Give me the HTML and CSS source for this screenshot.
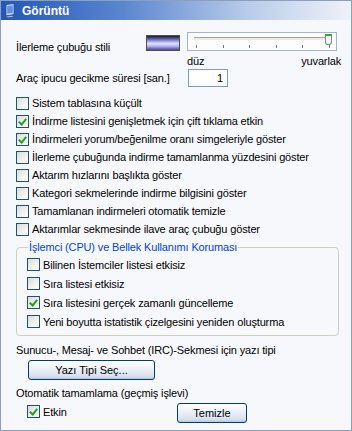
FILE: index.html
```html
<!DOCTYPE html>
<html lang="tr">
<head>
    <meta charset="UTF-8">
    <title>Görüntü</title>
    <link rel="stylesheet" href="styles.css">
</head>
<body>
    <div class="panel">
        <div class="titlebar">
            <svg class="title-icon" width="13" height="16" viewBox="0 0 13 16">
                <path d="M2 1.5l8 -1v11l-8 1.5z" fill="#cfe0fb" stroke="#2b4f9e" stroke-width="0.9"/>
                <path d="M3.2 3l5.6 -0.7v7.5l-5.6 1z" fill="#5f8fe6"/>
                <path d="M1 13.5l7 -1.2l3 1.2l-7 1.5z" fill="#b9c9e6" stroke="#2b4f9e" stroke-width="0.8"/>
            </svg>
            <span>Görüntü</span>
        </div>

        <div class="content">
            <div class="row-style">
                <span class="style-label">İlerleme çubuğu stili</span>
                <div class="bar-sample"></div>
                <div class="slider-wrap">
                    <div class="slider">
                        <div class="track"></div>
                        <div class="ticks">
                            <i></i><i></i><i></i><i></i><i></i><i></i>
                        </div>
                        <div class="thumb"></div>
                    </div>
                    <div class="slider-labels">
                        <span>düz</span>
                        <span>yuvarlak</span>
                    </div>
                </div>
            </div>

            <div class="row-delay">
                <span class="delay-label">Araç ipucu gecikme süresi [san.]</span>
                <div class="num-input">1</div>
            </div>

            <div class="checks">
                <label class="check"><span class="box"></span>Sistem tablasına küçült</label>
                <label class="check"><span class="box on"></span>İndirme listesini genişletmek için çift tıklama etkin</label>
                <label class="check"><span class="box on"></span>İndirmeleri yorum/beğenilme oranı simgeleriyle göster</label>
                <label class="check"><span class="box"></span>İlerleme çubuğunda indirme tamamlanma yüzdesini göster</label>
                <label class="check"><span class="box"></span>Aktarım hızlarını başlıkta göster</label>
                <label class="check"><span class="box"></span>Kategori sekmelerinde indirme bilgisini göster</label>
                <label class="check"><span class="box"></span>Tamamlanan indirmeleri otomatik temizle</label>
                <label class="check"><span class="box"></span>Aktarımlar sekmesinde ilave araç çubuğu göster</label>
            </div>

            <fieldset class="group">
                <legend>İşlemci (CPU) ve Bellek Kullanımı Koruması</legend>
                <label class="check"><span class="box"></span>Bilinen İstemciler listesi etkisiz</label>
                <label class="check"><span class="box"></span>Sıra listesi etkisiz</label>
                <label class="check"><span class="box on"></span>Sıra listesini gerçek zamanlı güncelleme</label>
                <label class="check"><span class="box"></span>Yeni boyutta istatistik çizelgesini yeniden oluşturma</label>
            </fieldset>

            <div class="font-label">Sunucu-, Mesaj- ve Sohbet (IRC)-Sekmesi için yazı tipi</div>
            <button class="xp-btn font-btn">Yazı Tipi Seç...</button>

            <div class="auto-label">Otomatik tamamlama (geçmiş işlevi)</div>
            <div class="row-auto">
                <label class="check"><span class="box on"></span>Etkin</label>
                <button class="xp-btn clear-btn">Temizle</button>
            </div>
        </div>
    </div>
</body>
</html>
```

FILE: styles.css
```css
:root {
    --panel-bg: #f7f8fc;
    --text: #000;
    --group-blue: #0046d5;
    --box-border: #1c5180;
    --check-green: #21a121;
}

body {
    margin: 0;
    font-family: 'Liberation Sans', Arial, sans-serif;
    font-size: 11px;
    letter-spacing: -0.15px;
    color: var(--text);
    background: #ffffff;
}

.panel {
    width: 350px;
    height: 429px;
    border: 1px solid #8d9fbc;
    background: var(--panel-bg);
    overflow: hidden;
}

.titlebar {
    height: 19px;
    display: flex;
    align-items: center;
    gap: 5px;
    padding-left: 3px;
    background: linear-gradient(to right, #2456b7 0%, #5b86cf 35%, #b8cbea 70%, #eef2f9 100%);
    color: #fff;
    font-weight: bold;
    font-size: 12px;
    letter-spacing: 0;
}

.title-icon {
    flex-shrink: 0;
}

.content {
    padding: 12px 0 0 15px;
}

/* progress bar style row */
.row-style {
    display: flex;
    align-items: flex-start;
}

.style-label {
    width: 130px;
    margin-top: 9px;
}

.bar-sample {
    width: 32px;
    height: 14px;
    margin-top: 3px;
    border: 1px solid #505050;
    background: linear-gradient(to bottom, #1a1a2a 0%, #5c5c9c 20%, #a9a9f4 40%, #e4e4ff 55%, #a9a9f4 75%, #4a4a80 100%);
}

.slider-wrap {
    margin-left: 7px;
    width: 150px;
}

.slider {
    position: relative;
    height: 17px;
    border: 1px solid #a7b3c6;
    background: #fdfdfd;
}

.track {
    margin: 4px 6px 0 6px;
    height: 2px;
    border-top: 1px solid #a0a0a0;
    background: #ecebe4;
}

.ticks {
    display: flex;
    justify-content: space-between;
    margin: 5px 6px 0 8px;
}

.ticks i {
    width: 1px;
    height: 3px;
    background: #7a7a7a;
}

.thumb {
    position: absolute;
    right: 4px;
    top: 1px;
    width: 5px;
    height: 8px;
    border: 1px solid #7c8a99;
    border-top: 2px solid #22b022;
    border-radius: 0 0 3px 3px;
    background: #f4f4f0;
}

.slider-labels {
    display: flex;
    justify-content: space-between;
    margin-top: 4px;
    margin-right: -4px;
}

/* tooltip delay row */
.row-delay {
    display: flex;
    align-items: center;
    margin-top: 2px;
}

.delay-label {
    width: 172px;
}

.num-input {
    width: 34px;
    height: 16px;
    line-height: 16px;
    padding-right: 4px;
    text-align: right;
    border: 1px solid #7f9db9;
    background: #fff;
}

/* checkboxes */
.checks {
    margin-top: 7px;
    display: flex;
    flex-direction: column;
}

.check {
    display: flex;
    align-items: center;
    gap: 3px;
    height: 18px;
    white-space: nowrap;
}

.box {
    width: 11px;
    height: 11px;
    border: 1px solid var(--box-border);
    background: linear-gradient(135deg, #dcdcd5 0%, #f3f3ef 60%, #ffffff 100%);
    position: relative;
    flex-shrink: 0;
}

.box.on::after {
    content: "";
    position: absolute;
    left: 3px;
    top: 1px;
    width: 3px;
    height: 6px;
    border: solid var(--check-green);
    border-width: 0 2px 2px 0;
    transform: rotate(40deg);
}

/* group box */
.group {
    margin: 3px 0 0 0;
    width: 323px;
    box-sizing: border-box;
    padding: 2px 0 4px 10px;
    border: 1px solid #d0d0bf;
    border-radius: 4px;
}

.group legend {
    color: var(--group-blue);
    padding: 0 1px;
    margin-left: 1px;
}

.group .check {
    height: 19px;
}

.font-label {
    margin-top: 8px;
}

.xp-btn {
    font-family: inherit;
    font-size: 11px;
    letter-spacing: 0;
    color: #000;
    border: 1px solid #003c74;
    border-radius: 3px;
    background: linear-gradient(to bottom, #ffffff 0%, #eef2f8 40%, #d8e0ee 85%, #b9c6dc 100%);
    padding: 0;
    height: 20px;
}

.font-btn {
    display: block;
    width: 127px;
    margin: 4px 0 0 12px;
}

.auto-label {
    margin-top: 7px;
}

.row-auto {
    display: flex;
    align-items: center;
    margin-top: 1px;
    padding-left: 11px;
}

.row-auto .check {
    width: 150px;
}

.clear-btn {
    width: 70px;
    margin-top: 3px;
}
```
